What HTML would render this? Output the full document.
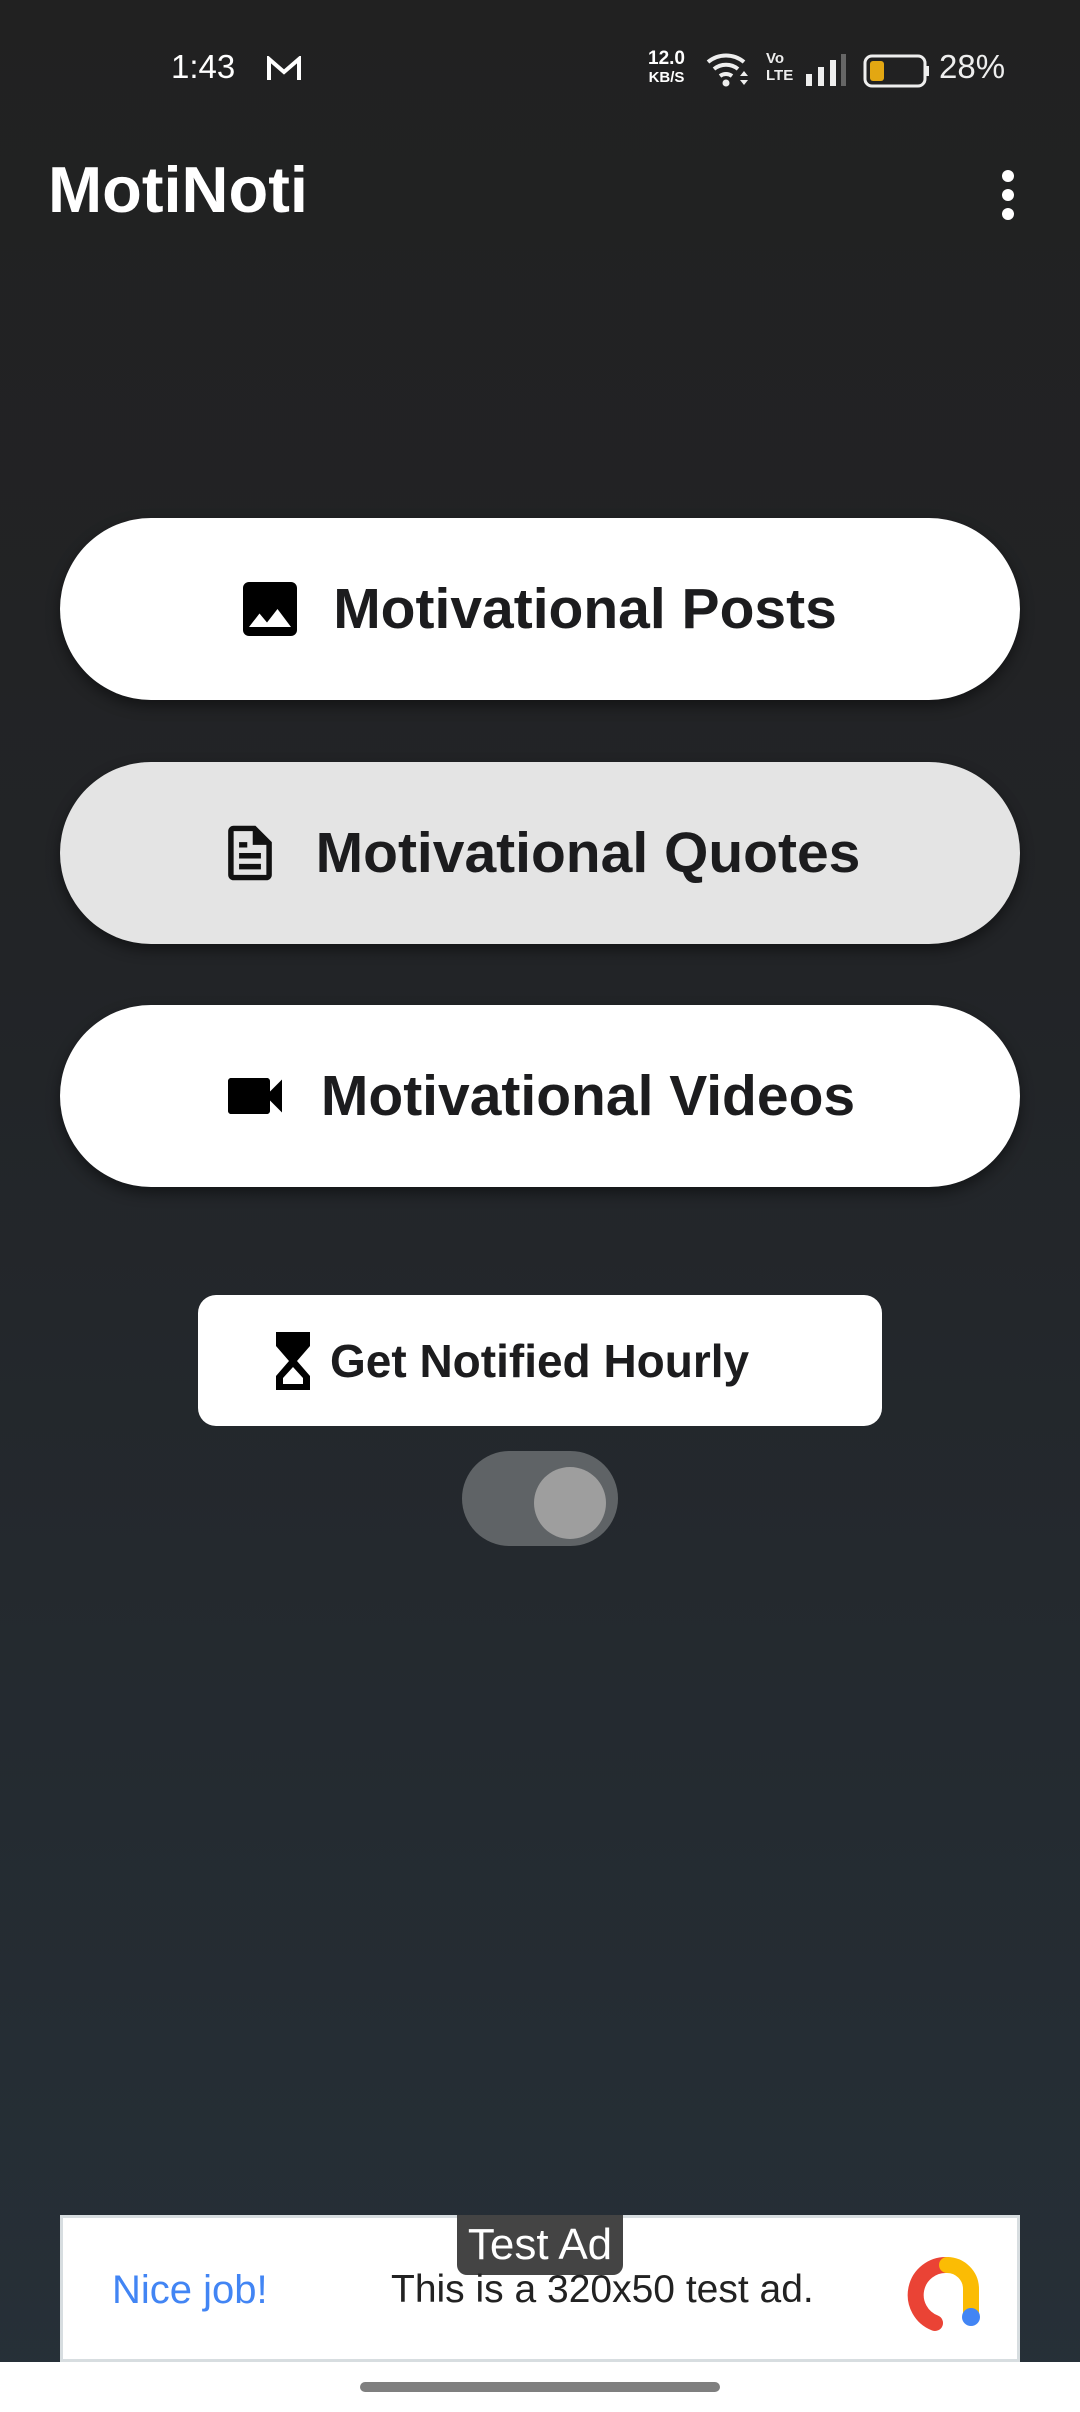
<!DOCTYPE html>
<html><head><meta charset="utf-8"><style>
*{margin:0;padding:0;box-sizing:border-box}
body{width:1080px;height:2412px;overflow:hidden;position:relative;font-family:"Liberation Sans",sans-serif;background:linear-gradient(180deg,#212121 0%,#222427 40%,#263038 100%)}
.a{position:absolute}
.btn{position:absolute;left:60px;width:960px;height:182px;border-radius:91px;background:#fff;box-shadow:0 6px 14px rgba(0,0,0,.45);display:flex;align-items:center;justify-content:center;font-weight:bold;font-size:57px;color:#1c1c1e}
.btn svg{margin-right:36px}
</style></head><body>
<div class="a" style="left:171px;top:48px;color:#fff;font-size:33px">1:43</div>
<svg class="a" style="left:267px;top:56px" width="34" height="26" viewBox="0 0 34 26"><path d="M2 24V3l15 13L32 3v21" fill="none" stroke="#fff" stroke-width="4"/></svg>
<div class="a" style="left:648px;top:50px;color:#fff;font-size:19px;font-weight:bold;line-height:18px;text-align:center">12.0<br><span style="font-size:15px">KB/S</span></div>
<svg class="a" style="left:706px;top:50px" width="44" height="38" viewBox="0 0 44 38"><path d="M2 12a28 28 0 0 1 36 0M8 19a19 19 0 0 1 24 0M14 26a10 10 0 0 1 12 0" fill="none" stroke="#eee" stroke-width="4"/><circle cx="20" cy="33" r="3.5" fill="#eee"/><path d="M34 26l4-5 4 5zM34 30l4 5 4-5z" fill="#eee"/></svg>
<div class="a" style="left:766px;top:50px;color:#eee;font-size:15px;font-weight:bold;line-height:17px">Vo<br>LTE</div>
<svg class="a" style="left:804px;top:54px" width="44" height="32"><rect x="2" y="20" width="6" height="12" fill="#eee"/><rect x="14" y="13" width="6" height="19" fill="#eee"/><rect x="26" y="6" width="6" height="26" fill="#eee"/><rect x="37" y="0" width="5" height="32" fill="#666"/></svg>
<svg class="a" style="left:863px;top:54px" width="68" height="34"><rect x="2" y="2" width="60" height="30" rx="7" fill="none" stroke="#eee" stroke-width="3"/><rect x="7" y="7" width="14" height="20" rx="3" fill="#e3a712"/><rect x="63" y="12" width="3" height="10" fill="#eee"/></svg>
<div class="a" style="left:939px;top:48px;color:#eee;font-size:33px">28%</div>
<div class="a" style="left:48px;top:152px;color:#fff;font-size:65px;font-weight:bold">MotiNoti</div>
<svg class="a" style="left:998px;top:168px" width="20" height="54"><circle cx="10" cy="8" r="6" fill="#fff"/><circle cx="10" cy="27" r="6" fill="#fff"/><circle cx="10" cy="46" r="6" fill="#fff"/></svg>

<div class="btn" style="top:518px"><svg width="54" height="54" viewBox="3 3 18 18"><path d="M21 19V5c0-1.1-.9-2-2-2H5c-1.1 0-2 .9-2 2v14c0 1.1.9 2 2 2h14c1.1 0 2-.9 2-2zM8.5 13.5l2.5 3 3.5-4.5 4.5 6H5l3.5-4.5z" fill="#000"/></svg>Motivational Posts</div>
<div class="btn" style="top:762px;background:#e4e4e4"><svg width="60" height="60" viewBox="3 1 18 22"><path d="M14 2H6c-1.1 0-2 .9-2 2v16c0 1.1.9 2 2 2h12c1.1 0 2-.9 2-2V8l-6-6zm4 18H6V4h7v5h5v11zM8 12h8v2H8zm0 4h8v2H8zm0-8h3v2H8z" fill="#111"/></svg>Motivational Quotes</div>
<div class="btn" style="top:1005px"><svg width="60" height="60" viewBox="2 2 20 20"><path d="M17 10.5V7c0-.55-.45-1-1-1H4c-.55 0-1 .45-1 1v10c0 .55.45 1 1 1h12c.55 0 1-.45 1-1v-3.5l4 4v-11l-4 4z" fill="#000"/></svg>Motivational Videos</div>

<div class="a" style="left:198px;top:1295px;width:684px;height:131px;border-radius:18px;background:#fff;display:flex;align-items:center;font-weight:bold;font-size:46px;color:#1c1c1e">
<svg style="margin-left:76px;margin-right:18px" width="38" height="62" viewBox="0 0 38 62"><path d="M2 2h34v14L23 31l13 15v14H2V46l13-15L2 16z" fill="#000"/><path d="M19 37l10 11v6H9v-6z" fill="#fff"/></svg>Get Notified Hourly</div>
<div class="a" style="left:462px;top:1451px;width:156px;height:95px;border-radius:48px;background:#5f6366"></div>
<div class="a" style="left:534px;top:1467px;width:72px;height:72px;border-radius:50%;background:#9e9e9e"></div>

<div class="a" style="left:60px;top:2215px;width:960px;height:147px;background:#fff;border:3px solid #d7dde0"></div>
<div class="a" style="left:457px;top:2215px;width:166px;height:60px;background:#444;border-radius:0 0 10px 10px;color:#fff;font-size:44px;text-align:center;line-height:60px">Test Ad</div>
<div class="a" style="left:112px;top:2268px;color:#4285f4;font-size:40px">Nice job!</div>
<div class="a" style="left:391px;top:2268px;color:#222;font-size:39px">This is a 320x50 test ad.</div>
<svg class="a" style="left:905px;top:2253px" width="78" height="80" viewBox="0 0 78 80"><path d="M30 70A30 30 0 0 1 42 12" fill="none" stroke="#ea4335" stroke-width="16" stroke-linecap="round"/><path d="M42 12a24 24 0 0 1 24 24v28" fill="none" stroke="#fbbc04" stroke-width="16" stroke-linecap="round"/><circle cx="66" cy="64" r="9" fill="#4285f4"/></svg>
<div class="a" style="left:0;top:2362px;width:1080px;height:50px;background:#fff"></div>
<div class="a" style="left:360px;top:2382px;width:360px;height:10px;border-radius:5px;background:#7f7f7f"></div>
</body></html>
